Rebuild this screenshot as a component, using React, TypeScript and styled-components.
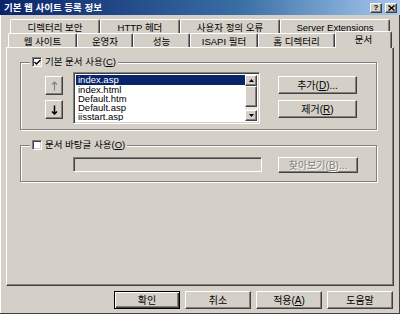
import React from "react";
import styled, { createGlobalStyle, css } from "styled-components";

const FONT = `"Liberation Sans", "Noto Sans CJK KR", sans-serif`;

const Global = createGlobalStyle`
  html, body { margin: 0; padding: 0; background: #d4d0c8; }
  body { font-family: ${FONT}; font-size: 9.5px; color: #000; }
  * { box-sizing: border-box; }
`;

const raised = css`
  background: #d4d0c8;
  border: 1px solid;
  border-color: #fff #404040 #404040 #fff;
  box-shadow: inset -1px -1px 0 #808080;
`;

const sunken = css`
  border: 1px solid;
  border-color: #808080 #fff #fff #808080;
  box-shadow: inset 1px 1px 0 #404040, inset -1px -1px 0 #d4d0c8;
`;

const Window = styled.div`
  width: 400px;
  height: 314px;
  background: #d4d0c8;
  display: flex;
  flex-direction: column;
  overflow: hidden;
  box-shadow: inset -1px -1px 0 #404040, inset 1px 0 0 #fff;
`;

const TitleBar = styled.div`
  height: 15px;
  flex: none;
  display: flex;
  align-items: center;
  padding: 0 3px 0 4px;
  background: linear-gradient(to right, #0a246a 0%, #3a6ea5 60%, #a6caf0 100%);
`;

const TitleText = styled.div`
  flex: 1;
  color: #fff;
  font-weight: bold;
  font-size: 9.5px;
  line-height: 13px;
  white-space: nowrap;
`;

const CaptionButton = styled.div<{ $gap?: number }>`
  ${raised};
  width: 12px;
  height: 10px;
  margin-left: ${(p) => p.$gap ?? 0}px;
  display: flex;
  align-items: center;
  justify-content: center;
  font-size: 8px;
  font-weight: bold;
  line-height: 8px;
  font-family: "Liberation Sans", sans-serif;
`;

const Body = styled.div`
  flex: 1;
  display: flex;
  flex-direction: column;
  padding: 4px 6px 0 6px;
`;

const TabRow = styled.div<{ $indent: number }>`
  display: flex;
  height: 14px;
  padding-left: ${(p) => p.$indent}px;
  flex: none;
  align-items: flex-start;
`;

const Tab = styled.div<{ $w: number; $active?: boolean }>`
  width: ${(p) => p.$w}px;
  height: ${(p) => (p.$active ? 17 : 14)}px;
  margin-top: ${(p) => (p.$active ? -2 : 0)}px;
  flex: none;
  display: flex;
  align-items: ${(p) => (p.$active ? "flex-start" : "center")};
  padding-top: ${(p) => (p.$active ? 2 : 2)}px;
  justify-content: center;
  background: #d4d0c8;
  border-top: 1px solid #fff;
  border-left: 1px solid #fff;
  border-right: 1px solid #404040;
  box-shadow: inset -1px 0 0 #808080;
  border-top-left-radius: 2px;
  border-top-right-radius: 2px;
  white-space: nowrap;
  line-height: 11px;
  position: relative;
  z-index: ${(p) => (p.$active ? 2 : 0)};
`;

const Panel = styled.div`
  height: 239px;
  flex: none;
  display: flex;
  flex-direction: column;
  border: 1px solid;
  border-color: #fff #404040 #404040 #fff;
  box-shadow: inset -1px -1px 0 #808080;
  padding: 8px 16px 0 13px;
`;

const Group = styled.fieldset<{ $top?: number }>`
  margin: ${(p) => p.$top ?? 0}px 0 0 0;
  padding: 0;
  border: 1px solid #808080;
  box-shadow: inset 1px 1px 0 #fff, 1px 1px 0 #fff;
  min-inline-size: 0;
`;

const Legend = styled.legend`
  margin-left: 9px;
  padding: 0 2px;
  display: flex;
  align-items: center;
  gap: 3px;
  line-height: 12px;
  background: #d4d0c8;
`;

const CheckBox = styled.span`
  width: 10px;
  height: 10px;
  background: #fff;
  ${sunken};
  display: flex;
  align-items: center;
  justify-content: center;
`;

const U = styled.span`
  text-decoration: underline;
`;

const GroupContent = styled.div<{ $pad: string }>`
  display: flex;
  align-items: flex-start;
  padding: ${(p) => p.$pad};
`;

const ArrowCol = styled.div`
  display: flex;
  flex-direction: column;
  gap: 5px;
  margin-top: 4px;
`;

const ArrowButton = styled.div`
  ${raised};
  width: 18px;
  height: 19px;
  display: flex;
  align-items: center;
  justify-content: center;
`;

const ListBox = styled.div`
  width: 187px;
  height: 52px;
  margin-left: 10px;
  background: #fff;
  ${sunken};
  padding: 2px;
  display: flex;
`;

const Items = styled.div`
  flex: 1;
  overflow: hidden;
`;

const Item = styled.div<{ $selected?: boolean }>`
  height: 9px;
  line-height: 9px;
  padding-left: 2px;
  font-size: 9.5px;
  white-space: nowrap;
  background: ${(p) => (p.$selected ? "#0a246a" : "transparent")};
  color: ${(p) => (p.$selected ? "#fff" : "#000")};
  ${(p) => p.$selected && css`height: 10px; line-height: 10px;`}
`;

const ScrollBar = styled.div`
  width: 12px;
  display: flex;
  flex-direction: column;
  background: #ebe9e4;
`;

const ScrollBtn = styled.div`
  ${raised};
  height: 11px;
  flex: none;
  display: flex;
  align-items: center;
  justify-content: center;
`;

const Thumb = styled.div`
  ${raised};
  height: 21px;
  flex: none;
`;

const Track = styled.div`
  flex: 1;
`;

const ActionCol = styled.div`
  display: flex;
  flex-direction: column;
  gap: 6px;
  margin-left: 18px;
  margin-top: 4px;
`;

const PushButton = styled.div<{ $w: number; $h?: number; $default?: boolean; $disabled?: boolean }>`
  width: ${(p) => p.$w}px;
  height: ${(p) => p.$h ?? 18}px;
  flex: none;
  display: flex;
  align-items: center;
  justify-content: center;
  white-space: nowrap;
  line-height: 11px;
  font-size: 10px;
  background: #d4d0c8;
  ${(p) =>
    p.$default
      ? css`
          border: 1px solid #000;
          box-shadow: inset 1px 1px 0 #fff, inset -1px -1px 0 #404040, inset -2px -2px 0 #808080;
        `
      : raised};
  color: ${(p) => (p.$disabled ? "#808080" : "#000")};
  text-shadow: ${(p) => (p.$disabled ? "1px 1px 0 #fff" : "none")};
`;

const TextField = styled.div`
  width: 189px;
  height: 15px;
  ${sunken};
  background: #d4d0c8;
`;

const Spacer = styled.div<{ $w: number }>`
  width: ${(p) => p.$w}px;
  flex: none;
`;

const Footer = styled.div`
  display: flex;
  justify-content: flex-end;
  gap: 5px;
  margin-top: 5px;
  padding-right: 1px;
`;

const Check = () => (
  <svg width="7" height="7" viewBox="0 0 7 7">
    <path d="M0.5 3 L2.5 5 L6.5 1" stroke="#000" strokeWidth="1.5" fill="none" />
  </svg>
);

const UpArrow = ({ color }: { color: string }) => (
  <svg width="7" height="10" viewBox="0 0 7 10">
    <path d="M3.5 1 V9.5 M1 3.5 L3.5 1 L6 3.5" stroke={color} strokeWidth="1.2" fill="none" />
  </svg>
);

const DownArrow = ({ color }: { color: string }) => (
  <svg width="7" height="10" viewBox="0 0 7 10">
    <path d="M3.5 0.5 V9 M1 6.5 L3.5 9 L6 6.5" stroke={color} strokeWidth="1.5" fill="none" />
  </svg>
);

const Tri = ({ down }: { down?: boolean }) => (
  <svg width="5" height="3" viewBox="0 0 5 3">
    <path d={down ? "M0 0 H5 L2.5 3 Z" : "M0 3 H5 L2.5 0 Z"} fill="#000" />
  </svg>
);

const CloseX = () => (
  <svg width="7" height="6" viewBox="0 0 7 6">
    <path d="M0.5 0.5 L6.5 5.5 M6.5 0.5 L0.5 5.5" stroke="#000" strokeWidth="1.4" />
  </svg>
);

const row1 = [
  { label: "디렉터리 보안", w: 90 },
  { label: "HTTP 헤더", w: 80 },
  { label: "사용자 정의 오류", w: 100 },
  { label: "Server Extensions", w: 110 },
];

const row2 = [
  { label: "웹 사이트", w: 69 },
  { label: "운영자", w: 56 },
  { label: "성능", w: 57 },
  { label: "ISAPI 필터", w: 68 },
  { label: "홈 디렉터리", w: 77 },
  { label: "문서", w: 57, active: true },
];

const docs = ["index.asp", "index.html", "Default.htm", "Default.asp", "iisstart.asp", "Default.aspx"];

export default function App() {
  return (
    <>
      <Global />
      <Window>
        <TitleBar>
          <TitleText>기본 웹 사이트 등록 정보</TitleText>
          <CaptionButton>?</CaptionButton>
          <CaptionButton $gap={3}>
            <CloseX />
          </CaptionButton>
        </TitleBar>
        <Body>
          <TabRow $indent={4}>
            {row1.map((t) => (
              <Tab key={t.label} $w={t.w}>
                {t.label}
              </Tab>
            ))}
          </TabRow>
          <TabRow $indent={2}>
            {row2.map((t) => (
              <Tab key={t.label} $w={t.w} $active={t.active}>
                {t.label}
              </Tab>
            ))}
          </TabRow>
          <Panel>
            <Group>
              <Legend>
                <CheckBox>
                  <Check />
                </CheckBox>
                <span>
                  기본 문서 사용(<U>C</U>)
                </span>
              </Legend>
              <GroupContent $pad="4px 17px 5px 24px">
                <ArrowCol>
                  <ArrowButton>
                    <UpArrow color="#808080" />
                  </ArrowButton>
                  <ArrowButton>
                    <DownArrow color="#000" />
                  </ArrowButton>
                </ArrowCol>
                <ListBox>
                  <Items>
                    {docs.map((d, i) => (
                      <Item key={d} $selected={i === 0}>
                        {d}
                      </Item>
                    ))}
                  </Items>
                  <ScrollBar>
                    <ScrollBtn>
                      <Tri />
                    </ScrollBtn>
                    <Thumb />
                    <Track />
                    <ScrollBtn>
                      <Tri down />
                    </ScrollBtn>
                  </ScrollBar>
                </ListBox>
                <ActionCol>
                  <PushButton $w={79}>
                    <span>
                      추가(<U>D</U>)...
                    </span>
                  </PushButton>
                  <PushButton $w={79}>
                    <span>
                      제거(<U>R</U>)
                    </span>
                  </PushButton>
                </ActionCol>
              </GroupContent>
            </Group>
            <Group $top={9}>
              <Legend>
                <CheckBox />
                <span>
                  문서 바탕글 사용(<U>O</U>)
                </span>
              </Legend>
              <GroupContent $pad="6px 17px 8px 52px">
                <TextField />
                <Spacer $w={16} />
                <PushButton $w={80} $h={16} $disabled>
                  <span>
                    찾아보기(<U>B</U>)...
                  </span>
                </PushButton>
              </GroupContent>
            </Group>
          </Panel>
          <Footer>
            <PushButton $w={66} $default>
              확인
            </PushButton>
            <PushButton $w={66}>취소</PushButton>
            <PushButton $w={66}>
              <span>
                적용(<U>A</U>)
              </span>
            </PushButton>
            <PushButton $w={66}>도움말</PushButton>
          </Footer>
        </Body>
      </Window>
    </>
  );
}
